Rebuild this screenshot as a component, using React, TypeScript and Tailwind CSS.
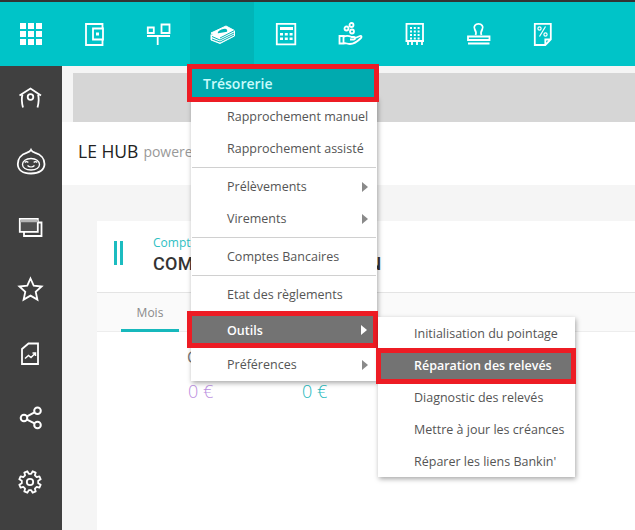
import type { ReactNode } from "react";

const font = "font-['Open_Sans',sans-serif]";

function Icon({ children }: { children: ReactNode }) {
  return (
    <svg width="32" height="32" viewBox="0 0 32 32" fill="none" stroke="white" strokeWidth="1.8">
      {children}
    </svg>
  );
}

// gear outline, 8 teeth
function gearPath(cx: number, cy: number, rOut: number, rIn: number) {
  const pts: string[] = [];
  for (let i = 0; i < 8; i++) {
    const a = (i * Math.PI) / 4 + Math.PI / 8;
    const step = Math.PI / 8;
    [
      [rIn, a - step * 0.62],
      [rOut, a - step * 0.38],
      [rOut, a + step * 0.38],
      [rIn, a + step * 0.62],
    ].forEach(([r, t]) => pts.push(`${(cx + r * Math.cos(t)).toFixed(1)} ${(cy + r * Math.sin(t)).toFixed(1)}`));
  }
  return `M${pts.join("L")}Z`;
}

const topIcons: ReactNode[] = [
  <>
    <path d="M24.500 10V6H8v21h16.500v-5" />
    <path d="M15 10.500h10v11H15z" />
    <path d="M18 14.500h3v3h-3z" fill="white" stroke="none" />
  </>,
  <path d="M5.800 9.500h6v5.500h-6zM19.500 6.500h8v8.500h-8zM5 18h23M15.700 18v9" />,
  <>
    <path d="M5 15 20 8l8.500 4.500L14 20z" fill="white" stroke="white" strokeWidth="1" />
    <ellipse cx="16.500" cy="14" rx="5" ry="2.600" fill="#00b5b8" stroke="none" transform="rotate(-24 16.500 14)" />
    <path d="M5 16.500V22l9 3.500L28.500 18v-5.500" fill="white" stroke="white" strokeWidth="1" />
    <path d="M6 18.500l8 3.500 14-7M6 21l8 3 14-7" stroke="#00b5b8" strokeWidth="1" />
    <path d="M14 20l14.500-7.500" stroke="#00b5b8" strokeWidth="1" />
  </>,
  <>
    <path d="M6.800 5.800h18.500v20.500H6.800z" />
    <path d="M10 9h13v3H10z" fill="white" stroke="none" />
    <path d="M10 15h3v2.500h-3zM14.800 15h3v2.500h-3zM19.600 15h3v2.500h-3zM10 19.500h3V22h-3zM14.800 19.500h3V22h-3zM19.600 19.500h3V22h-3z" fill="white" stroke="none" />
  </>,
  <>
    <circle cx="17.500" cy="7" r="2" />
    <circle cx="12.500" cy="10.500" r="2" />
    <circle cx="18" cy="13.500" r="2" />
    <path d="M5.500 18h4v7.500h-4zM9.500 19c3-2 5-1.500 8 0h2.500c1.500 0 1.500 2.500 0 2.500h-4M20 20.500l6-2.500c1.500-.5 2 1 1 2-3 3-7 6-11 6-2.500 0-4-1-6.500-1" />
  </>,
  <>
    <path d="M8.500 23V5.800h16.500V23M7.500 23h18.500M10 23v4M14 23v4M19 23v4M24 23v4" />
    <path d="M12 9h2v2h-2zM15.800 9h2v2h-2zM19.600 9h2v2h-2zM12 12.500h2v2h-2zM15.800 12.500h2v2h-2zM19.600 12.500h2v2h-2zM12 16h2v2h-2zM15.800 16h2v2h-2zM19.600 16h2v2h-2zM12 19.500h2v2h-2zM15.800 19.500h2v2h-2zM19.600 19.500h2v2h-2z" fill="white" stroke="none" />
  </>,
  <>
    <path d="M13.500 17c1-2 .5-3.500-.7-5.500-1.800-3 .7-5.700 3.700-5.700s5.500 2.700 3.700 5.700c-1.200 2-1.700 3.500-.7 5.500" />
    <path d="M6 18.500h21.500V22H6zM6 25.500h21.500" />
  </>,
  <>
    <path d="M8.800 5.800h16v15.700l-5.500 5.500H8.800zM24.800 21.500h-5.500V27" />
    <circle cx="13.500" cy="10.500" r="1.600" strokeWidth="1.200" />
    <circle cx="19.500" cy="16.500" r="1.600" strokeWidth="1.200" />
    <path d="M19.500 8.500 13.500 18.500" strokeWidth="1.200" />
  </>,
];

const sideIcons: ReactNode[] = [
  <>
    <path d="M4.500 13.500 15.500 6.500l10.500 7M7.500 12.500c-1 3-.8 8 .5 13M23 12.500c1 3 .8 8-.5 13" />
    <circle cx="15.500" cy="15" r="2.800" />
  </>,
  <>
    <path d="M16 3.800c.8 1.600 2.200 2.300 4.300 3 5.500 1.600 9.200 6 9.200 11.200 0 6-5.500 9.500-13.500 9.500S2.800 24 2.800 18c0-5.200 3.500-9.600 8.700-11.200 2.100-.7 3.700-1.400 4.500-3z" />
    <path d="M7.500 18.500c0-3.200 3.500-6 8.500-6s8.500 2.800 8.500 6-3.500 5.500-8.500 5.500-8.500-2.300-8.500-5.500z" strokeWidth="1.300" />
    <path d="M9.800 16.500c1-1.200 2.500-1.200 3.500 0M18.700 16.500c1-1.200 2.500-1.200 3.500 0M12.500 19.500c2 1.800 5 1.800 7 0" strokeWidth="1.300" />
  </>,
  <>
    <path d="M4.800 8.800h18v13h-18z" fill="#505050" />
    <path d="M5 11h18" strokeWidth="2.500" stroke="#b5b5b5" />
    <path d="M23 12.500h3.500V26H9v-4" />
  </>,
  <path d="m15.500 4.500 3.200 7.200 7.900.8-5.900 5.300 1.700 7.800-6.900-4-6.900 4 1.700-7.800-5.900-5.300 7.900-.8z" />,
  <>
    <path d="M13.500 5.500h9.500v20.500H7V11z" />
    <path d="M10 20.500l3.500-3 2.500 2 4-4M17.500 15h3v3" strokeWidth="1.500" />
  </>,
  <>
    <circle cx="9" cy="16" r="3.300" strokeWidth="2" />
    <circle cx="22.500" cy="8.800" r="3.300" strokeWidth="2" />
    <circle cx="22.500" cy="23" r="3.300" strokeWidth="2" />
    <path d="m12 14.400 7.500-4M12 17.600l7.500 3.800" strokeWidth="2" />
  </>,
  <>
    <path d={gearPath(15, 16, 11, 8.300)} strokeLinejoin="round" />
    <circle cx="15" cy="16" r="3.200" />
  </>,
];

const rowBase = `flex h-8 items-center pl-9 pt-[2px] whitespace-nowrap text-[12.5px] leading-none text-[#555555] ${font}`;

function Caret({ color = "text-[#8a8a8a]", right = "mr-[9px]" }: { color?: string; right?: string }) {
  return <span className={`ml-auto h-0 w-0 border-y-[5px] border-l-[6px] border-y-transparent border-l-current ${right} ${color}`} />;
}

function Row({ label, caret }: { label: string; caret?: boolean }) {
  return (
    <div className={rowBase}>
      <span>{label}</span>
      {caret && <Caret />}
    </div>
  );
}

function Sep() {
  return <div className="my-[2.5px] mx-[1px] h-px bg-[#d0d0d0]" />;
}

export default function App() {
  return (
    <div className="relative h-[530px] w-[635px] overflow-hidden bg-white">
      <header className="flex h-[66px] border-t-2 border-[#333333] bg-[#00c4c8]">
        <div className="flex h-full w-[62px] items-center justify-center">
          <div className="grid grid-cols-3 gap-[2px]">
            {Array.from({ length: 9 }).map((_, i) => (
              <span key={i} className="h-[6px] w-[6px] bg-white" />
            ))}
          </div>
        </div>
        {topIcons.map((icon, i) => (
          <div key={i} className={`flex h-full w-16 items-center justify-center ${i === 2 ? "bg-[#00b5b8]" : ""}`}>
            <Icon>{icon}</Icon>
          </div>
        ))}
      </header>

      <div className="flex h-[464px]">
        <aside className="flex w-[62px] shrink-0 flex-col bg-[#404040]">
          {sideIcons.map((icon, i) => (
            <div key={i} className="flex h-16 items-center justify-center">
              <Icon>{icon}</Icon>
            </div>
          ))}
        </aside>

        <main className="min-w-0 flex-1 bg-[#f5f5f5]">
          <div className="pl-[11px] pt-[7px]">
            <div className="h-[49px] bg-[#d6d6d6]" />
          </div>
          <div className="flex h-[63px] items-center bg-white pb-[4px] pl-4">
            <span className={`text-[17.5px] text-[#222222] ${font}`}>LE HUB</span>
            <span className={`ml-[5px] text-[14px] text-[#999999] ${font}`}>powered by</span>
          </div>
          <section className="ml-[35px] mt-9 h-[309px] bg-white">
            <div className="flex h-[72px] items-center border-b border-[#e4e4e4]">
              <div className="mb-2 ml-[17px] flex gap-[3px]">
                <span className="h-[24px] w-[3px] bg-[#1cbcc0]" />
                <span className="h-[24px] w-[3px] bg-[#1cbcc0]" />
              </div>
              <div className="ml-[30px]">
                <div className={`text-[12px] leading-[14px] text-[#2fbfc3] ${font}`}>Comptes</div>
                <div className="pt-[1px] font-['Roboto',sans-serif] text-[18px] font-medium leading-[26px] tracking-[0.3px] text-[#333333]">COMPTES DE LIQUIDATION</div>
              </div>
            </div>
            <div className="flex h-[39px] border-b border-[#ededed] bg-[#fafafa]">
              <div className={`ml-6 h-[39px] w-[58px] border-b-[3px] border-[#17b8bc] pt-[11px] text-center text-[12px] text-[#8a8a8a] ${font}`}>Mois</div>
            </div>
            <div className={`pl-[90px] pt-[14px] text-[16px] leading-[22px] text-[#777777] ${font}`}>C</div>
            <div className={`flex pl-[91px] pt-[11px] text-[18px] font-light leading-6 ${font}`}>
              <span className="w-[114px] text-[#bb8fe0]">0 €</span>
              <span className="text-[#1cb8bc]">0 €</span>
            </div>
          </section>
        </main>
      </div>

      <nav className="absolute left-[191px] top-[97px] w-[186px] bg-white pb-[1px] pt-[3px] shadow-[1px_2px_5px_rgba(0,0,0,0.35)]">
        <Row label="Rapprochement manuel" />
        <Row label="Rapprochement assisté" />
        <Sep />
        <Row label="Prélèvements" caret />
        <Row label="Virements" caret />
        <Sep />
        <Row label="Comptes Bancaires" />
        <Sep />
        <Row label="Etat des règlements" />
        <div className="h-[6px]" />
        <div className="h-[32px]" />
        <Row label="Préférences" caret />
      </nav>

      <div className={`absolute left-[187px] top-[64px] flex h-[38px] w-[192px] items-center border-[5px] border-[#ed1c24] bg-[#00aaaf] pl-[11px] text-[14px] font-semibold text-[#c8fbfb] ${font}`}>
        Trésorerie
      </div>

      <div className={`absolute left-[187px] top-[311px] flex h-[37px] w-[191px] items-center border-[5px] border-[#ed1c24] bg-[#737373] pl-[35px] pt-[3px] text-[12.5px] font-semibold text-white ${font}`}>
        <span>Outils</span>
        <Caret color="text-white" right="mr-[6px] -mt-[3px]" />
      </div>

      <nav className="absolute left-[378px] top-[317px] w-[197px] bg-white shadow-[1px_2px_5px_rgba(0,0,0,0.35)]">
        <Row label="Initialisation du pointage" />
        <div className="h-8" />
        <Row label="Diagnostic des relevés" />
        <Row label="Mettre à jour les créances" />
        <Row label="Réparer les liens Bankin'" />
      </nav>

      <div className={`absolute left-[376px] top-[348px] flex h-[36px] w-[200px] items-center whitespace-nowrap border-[5px] border-[#ed1c24] bg-[#737373] pl-[33px] text-[12.5px] font-semibold text-white ${font}`}>
        Réparation des relevés
      </div>
    </div>
  );
}
